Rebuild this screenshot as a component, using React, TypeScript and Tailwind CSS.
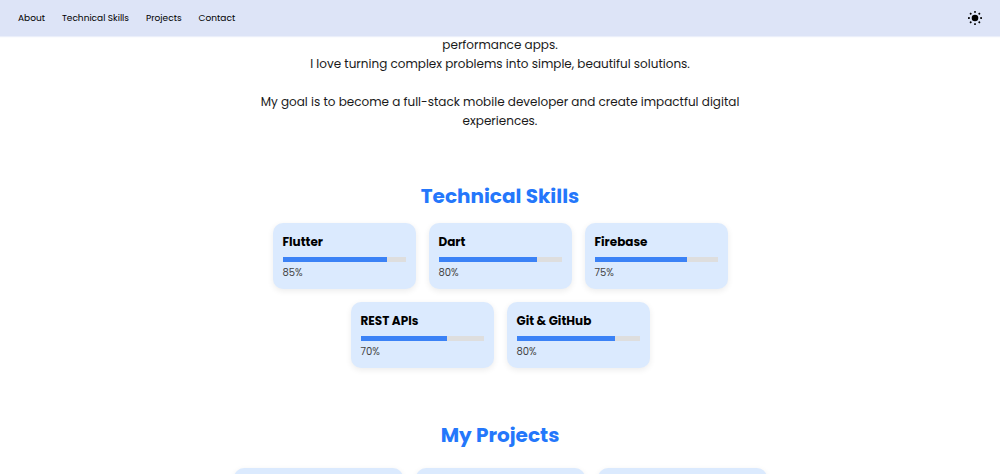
type Skill = { name: string; level: number };

const links = [
  { label: "About", href: "#about" },
  { label: "Technical Skills", href: "#skills" },
  { label: "Projects", href: "#projects" },
  { label: "Contact", href: "#contact" },
];

const skills: Skill[] = [
  { name: "Flutter", level: 85 },
  { name: "Dart", level: 80 },
  { name: "Firebase", level: 75 },
  { name: "REST APIs", level: 70 },
  { name: "Git & GitHub", level: 80 },
];

const rays = [0, 45, 90, 135, 180, 225, 270, 315];

function SunIcon() {
  return (
    <svg viewBox="0 0 16 16" className="size-4" aria-hidden="true">
      <circle cx="8" cy="8" r="3.3" />
      {rays.map((angle) => (
        <rect key={angle} x="7.1" y="1" width="1.8" height="1.8" rx="0.4" transform={`rotate(${angle} 8 8)`} />
      ))}
    </svg>
  );
}

function SkillCard({ name, level }: Skill) {
  return (
    <li className="w-[143px] rounded-[10px] bg-[#dbeafe] px-[10px] py-[9px] shadow-[0_2px_6px_rgba(0,0,0,0.08)]">
      <h3 className="text-[12px] leading-[19px] font-bold text-black">{name}</h3>
      <div className="mt-[6px] h-[5px] bg-[#dedede]">
        <div className="h-full bg-[#3b82f6]" style={{ width: `${level}%` }} />
      </div>
      <p className="mt-[3px] text-[10px] leading-[15px] text-[#444444]">{level}%</p>
    </li>
  );
}

export default function App() {
  return (
    <div className="flex h-screen flex-col overflow-hidden bg-white font-['Poppins','Inter',sans-serif] text-black">
      <header className="z-10 flex h-9 shrink-0 items-center justify-between bg-[#dde4f7] px-[18px] shadow-[0_1px_1px_rgba(221,228,247,0.6)]">
        <nav className="flex gap-[17px] text-[9px] leading-[15px]">
          {links.map((link) => (
            <a key={link.href} href={link.href}>
              {link.label}
            </a>
          ))}
        </nav>
        <button type="button" aria-label="Toggle theme" className="-mr-px flex">
          <SunIcon />
        </button>
      </header>

      <main className="-mt-px flex flex-col items-center">
        <section id="about" className="max-w-[500px] text-center text-[12px] leading-[19px] text-[#1a1a1a]">
          <p>
            performance apps.
            <br />
            I love turning complex problems into simple, beautiful solutions.
          </p>
          <p className="mt-[19px]">
            My goal is to become a full-stack mobile developer and create impactful digital experiences.
          </p>
        </section>

        <section id="skills" className="mt-[51px] flex flex-col items-center">
          <h2 className="text-[20px] leading-[30px] font-bold text-[#2477fb]">Technical Skills</h2>
          <ul className="mt-3 flex max-w-[520px] flex-wrap justify-center gap-[13px]">
            {skills.map((skill) => (
              <SkillCard key={skill.name} {...skill} />
            ))}
          </ul>
        </section>

        <section id="projects" className="mt-[52px] flex flex-col items-center">
          <h2 className="text-[20px] leading-[30px] font-bold text-[#2477fb]">My Projects</h2>
          <div className="mt-[18px] flex gap-[13px]">
            <article className="h-40 w-[169px] rounded-[10px] bg-[#dbeafe] shadow-[0_2px_6px_rgba(0,0,0,0.08)]" />
            <article className="h-40 w-[169px] rounded-[10px] bg-[#dbeafe] shadow-[0_2px_6px_rgba(0,0,0,0.08)]" />
            <article className="h-40 w-[169px] rounded-[10px] bg-[#dbeafe] shadow-[0_2px_6px_rgba(0,0,0,0.08)]" />
          </div>
        </section>
      </main>
    </div>
  );
}
